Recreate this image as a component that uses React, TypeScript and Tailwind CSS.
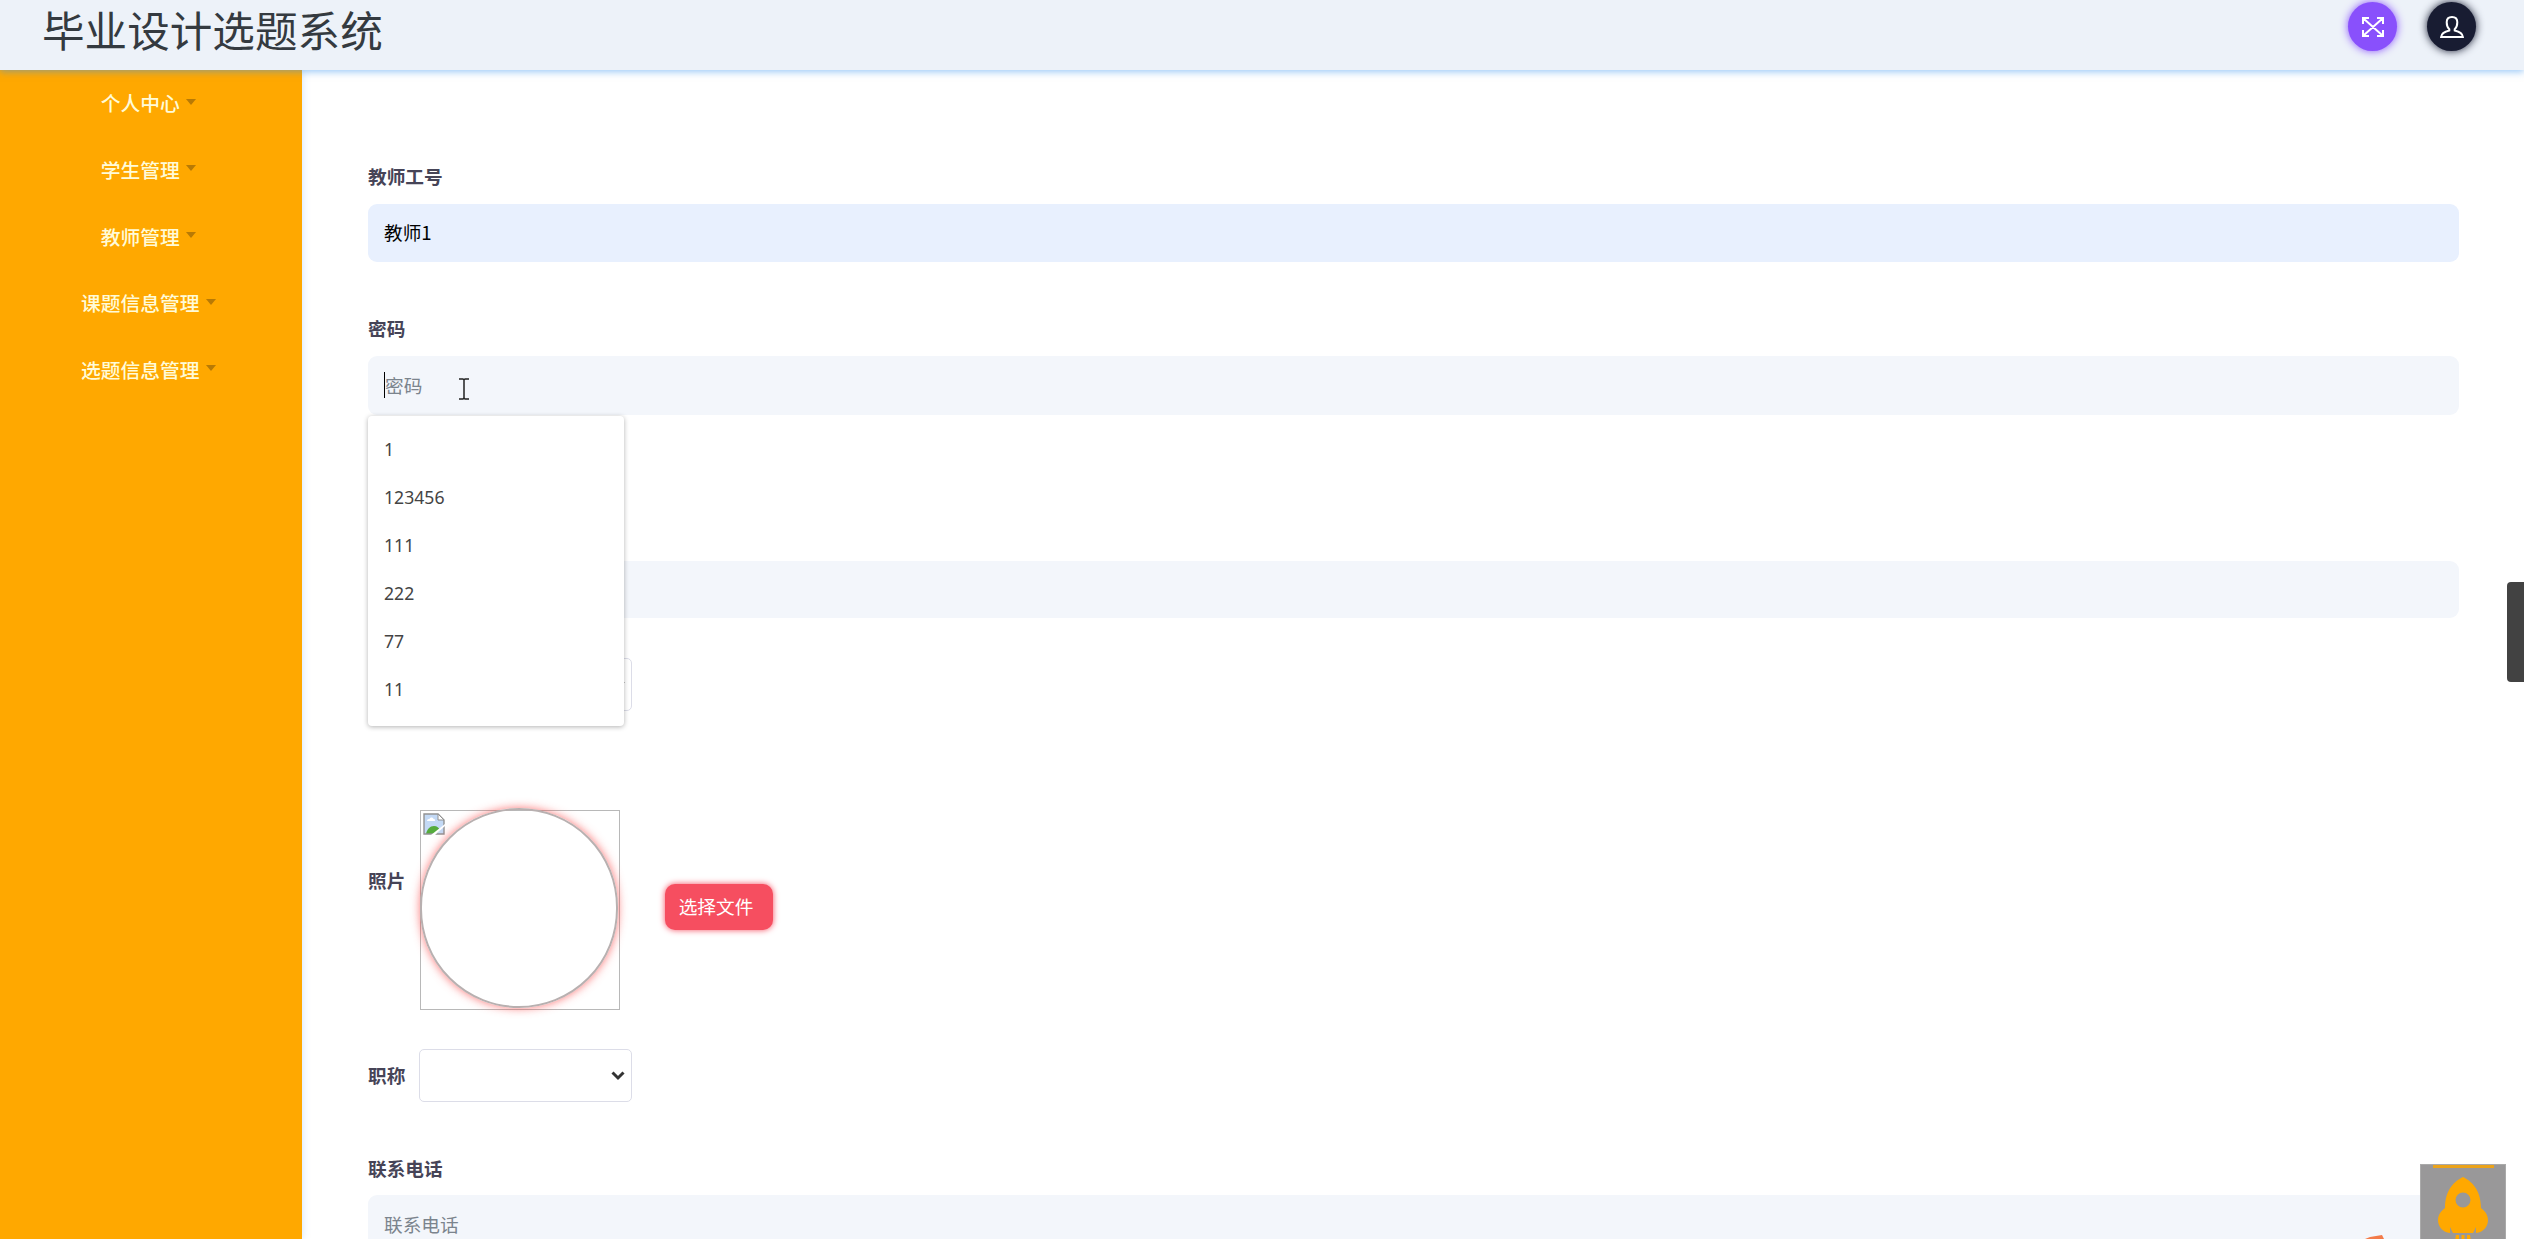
import React from 'react';

const menuItems = ['个人中心', '学生管理', '教师管理', '课题信息管理', '选题信息管理'];
const suggestions = ['1', '123456', '111', '222', '77', '11'];

function FullscreenIcon() {
  return (
    <svg width="22" height="20" viewBox="0 0 22 20" fill="none" stroke="#fff" strokeWidth="2">
      <path d="M1 7V1h6M15 1h6v6M21 13v6h-6M7 19H1v-6M1.5 1.5l19 17M20.5 1.5l-19 17" />
    </svg>
  );
}

function UserIcon() {
  return (
    <svg width="24" height="22" viewBox="0 0 24 22" fill="none" stroke="#fff" strokeWidth="2">
      <path d="M9.3 13.2C7.4 11.5 6.7 9 6.7 6.3C6.7 3 8.8 1 12 1s5.3 2 5.3 5.3c0 2.7-.7 5.2-2.6 6.9v1.3c3.8.9 7.8 2.5 8.2 6.500H1.100c.4-4 4.400-5.600 8.200-6.500z" />
    </svg>
  );
}

function BrokenImageIcon() {
  return (
    <svg width="22" height="22" viewBox="0 0 22 22">
      <path d="M1 1h14l6 6v14H1z" fill="#c3d9f5" />
      <path d="M4 8c0-2 2-2 2.500-2C7 4 10 4 10.500 6c2 0 2 2 1 2z" fill="#fff" />
      <path d="M3 21c1-5 4-8 8-8 3 0 5 2 6 4l-4 4z" fill="#55ab3c" />
      <path d="M1 21V1h14l6 6v14z" fill="none" stroke="#929292" strokeWidth="1.400" />
      <path d="M15 1v6h6z" fill="#fff" stroke="#929292" />
      <path d="M22 11v2L12 22H8z" fill="#fff" />
    </svg>
  );
}

function RocketIcon() {
  return (
    <svg width="52" height="64" viewBox="0 0 52 64" fill="#ffa800">
      <path
        fillRule="evenodd"
        d="M26 0C34 4 44 12 44 31c4 3 7 7 7 12 0 6-4 12-12 13v-6l-3 6H16l-3-6v6C5 55 1 49 1 43c0-5 3-9 7-12C8 12 18 4 26 0zm0 15.500a7.500 7.500 0 1 0 0 15 7.500 7.500 0 0 0 0-15z"
      />
      <path d="M19 58h3v6h-4zM24.500 58h3v6h-3zM30 58h3l1 6h-4z" />
    </svg>
  );
}

function Label({ children }: { children: React.ReactNode }) {
  return <label className="block h-7 text-[18.67px] leading-[26px] font-bold text-[#464457]">{children}</label>;
}

function Select() {
  return (
    <div className="flex h-[53px] w-[213px] items-center justify-end rounded-[5px] border border-[#dcdde8] bg-white pr-[6px]">
      <svg width="14" height="10" viewBox="0 0 14 10" fill="none" stroke="#333" strokeWidth="3">
        <path d="M1.500 1.500L7 7l5.500-5.500" />
      </svg>
    </div>
  );
}

export default function App() {
  return (
    <div className="flex h-[1239px] w-full flex-col overflow-hidden bg-white font-['Noto_Sans','Noto_Sans_CJK_SC',sans-serif]">
      {/* Header */}
      <header className="relative z-10 flex h-[70px] shrink-0 justify-between bg-[#edf2f9] pr-[48px] pl-[42px] shadow-[0_2px_7px_rgba(60,150,240,0.5)]">
        <h1 className="h-[58px] font-['Noto_Sans_CJK_SC',sans-serif] text-[42.600px] leading-[58px] font-normal text-[#343a40]">
          毕业设计选题系统
        </h1>
        <div className="flex gap-[30px] pt-[2px]">
          <button className="flex size-[49px] items-center justify-center rounded-full bg-[#8950fc] shadow-[0_0_8px_#8950fc]">
            <FullscreenIcon />
          </button>
          <button className="flex size-[49px] items-center justify-center rounded-full bg-[#181c32] shadow-[0_0_8px_#181c32]">
            <UserIcon />
          </button>
        </div>
      </header>

      <div className="flex min-h-0 flex-1">
        {/* Sidebar */}
        <nav className="w-[301.500px] shrink-0 bg-[#ffa800] shadow-[0_0_8px_rgba(60,150,240,0.25)]">
          {menuItems.map((item) => (
            <a key={item} className="flex h-[66.600px] items-center justify-center pr-[5px] font-['Noto_Sans_CJK_SC',sans-serif] text-[19.800px] font-medium text-[#fffbd8]">
              {item}
              <span className="mb-[3px] ml-[6px] border-x-[5.500px] border-t-[6px] border-x-transparent border-t-[#b87a05]" />
            </a>
          ))}
        </nav>

        {/* Form */}
        <main className="flex-1 pt-[93px] pr-[65px] pl-[66.500px] font-['Noto_Sans_CJK_SC',sans-serif] text-[18.670px]">
          <Label>教师工号</Label>
          <div className="mt-[12.500px] flex h-[58.500px] items-center rounded-[9px] bg-[#e8f0fe] px-[16px] pb-[2px] text-black">教师1</div>

          <div className="mt-[53px]">
            <Label>密码</Label>
          </div>
          <div className="relative mt-[13px] flex h-[58.500px] items-center rounded-[9px] bg-[#f3f6fb] px-[16px] pb-[1px] text-[#7b848d]">
            <span className="h-[26px] w-px bg-black" />
            密码
            <svg className="mt-[9px] ml-[37px]" width="10" height="22" viewBox="0 0 10 22" fill="none" stroke="#222" strokeWidth="1.500">
              <path d="M0 1h4l1 1 1-1h4M0 21h4l1-1 1 1h4M5 2v18" />
            </svg>
            <ul className="absolute top-[59.500px] left-0 z-10 h-[310px] w-[256px] rounded-[4px] bg-white py-[10px] font-['Noto_Sans',sans-serif] text-[17.650px] text-[#444] shadow-[0_1px_5px_rgba(0,0,0,0.3)]">
              {suggestions.map((value) => (
                <li key={value} className="flex h-12 items-center px-4">{value}</li>
              ))}
            </ul>
          </div>

          <div className="mt-[146.500px] h-[57px] rounded-[9px] bg-[#f3f6fb]" />

          <div className="mt-[40px] flex pl-[51px]">
            <Select />
          </div>

          <div className="mt-[99px] flex h-[201px]">
            <div className="w-[52px] pt-[57px]">
              <Label>照片</Label>
            </div>
            <div className="relative size-[200px] border border-[#b8b8b8] p-[2px]">
              <BrokenImageIcon />
              <div className="absolute -top-[3px] -left-[1px] h-[200px] w-[198px] rounded-full border-2 border-[#b8b0b0] shadow-[0_0_10px_rgba(250,60,60,0.7)]" />
            </div>
            <button className="mt-[74px] ml-[45px] h-[46px] w-[108px] rounded-[10px] bg-[#f64e60] pr-[6px] pb-[2px] text-white shadow-[0_0_6px_#f64e60]">
              选择文件
            </button>
          </div>

          <div className="mt-[38px] flex items-center">
            <div className="w-[51px]">
              <Label>职称</Label>
            </div>
            <Select />
          </div>

          <div className="mt-[53px]">
            <Label>联系电话</Label>
          </div>
          <div className="mt-[12px] flex h-[58.500px] items-center rounded-[9px] bg-[#f3f6fb] px-[16px] pb-[1px] text-[#7b848d]">联系电话</div>
        </main>
      </div>

      {/* Side handle */}
      <div className="fixed top-[582px] right-0 h-[100px] w-[17px] rounded-l-[4px] bg-[#424242]" />

      {/* Back to top */}
      <svg className="fixed bottom-0 left-[2365px]" width="20" height="4" viewBox="0 0 20 4">
        <path d="M0 4L5 2 17 0l2 4z" fill="#f37b49" />
      </svg>
      <div className="fixed top-[1164px] left-[2420px] flex h-[85px] w-[86px] flex-col items-center border border-[#aaa] bg-[#999899]">
        <span className="h-[3px] w-[61px] shrink-0 bg-[#eba31a]" />
        <div className="mt-[9px]">
          <RocketIcon />
        </div>
      </div>
    </div>
  );
}
